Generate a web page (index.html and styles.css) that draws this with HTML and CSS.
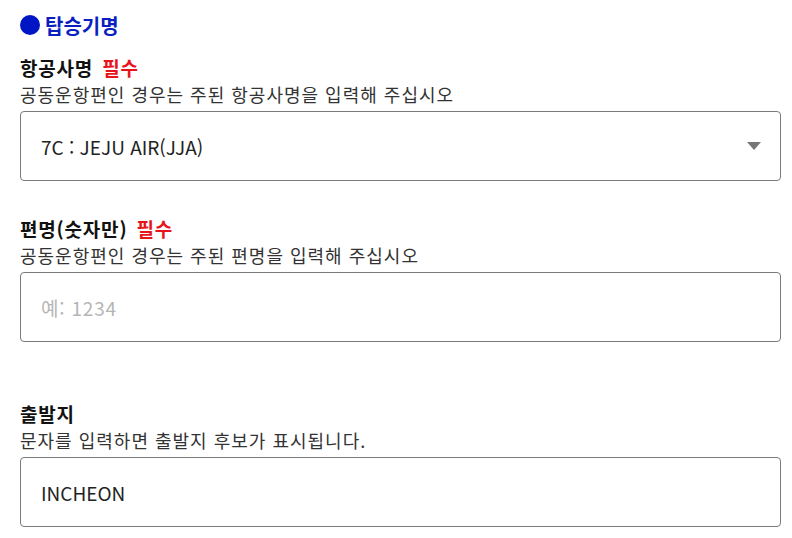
FILE: index.html
```html
<!DOCTYPE html>
<html lang="ko">
<head>
<meta charset="utf-8">
<link rel="stylesheet" href="styles.css">
</head>
<body>
<div class="page">
  <h2 class="section-title"><span class="dot"></span>탑승기명</h2>

  <div class="field field-first">
    <div class="label">항공사명 <span class="req">필수</span></div>
    <div class="help">공동운항편인 경우는 주된 항공사명을 입력해 주십시오</div>
    <div class="box select">
      <span class="value">7C : JEJU AIR(JJA)</span>
      <span class="arrow"></span>
    </div>
  </div>

  <div class="field field-second">
    <div class="label">편명(숫자만) <span class="req">필수</span></div>
    <div class="help">공동운항편인 경우는 주된 편명을 입력해 주십시오</div>
    <div class="box">
      <span class="placeholder">예: 1234</span>
    </div>
  </div>

  <div class="field field-third">
    <div class="label">출발지</div>
    <div class="help">문자를 입력하면 출발지 후보가 표시됩니다.</div>
    <div class="box">
      <span class="value">INCHEON</span>
    </div>
  </div>
</div>
</body>
</html>
```
FILE: styles.css
```css
html, body {
  margin: 0;
  padding: 0;
  background: #ffffff;
}
body {
  font-family: "Noto Sans CJK KR", "Noto Sans", sans-serif;
  color: #111111;
}
.page {
  padding: 10px 11px 0 20px;
  display: flex;
  flex-direction: column;
}
.section-title {
  margin: 0;
  height: 30px;
  display: flex;
  align-items: center;
  gap: 5px;
  font-size: 20px;
  font-weight: 700;
  color: #0a1fbf;
}
.dot {
  width: 20px;
  height: 20px;
  border-radius: 50%;
  background: #0015c4;
  display: inline-block;
}
.field {
  display: flex;
  flex-direction: column;
}
.field-first { margin-top: 15px; }
.field-second { margin-top: 35px; }
.field-third { margin-top: 59px; }
.label {
  font-size: 19px;
  font-weight: 700;
  line-height: 26px;
  letter-spacing: 0.8px;
  color: #111111;
}
.req {
  color: #e8141c;
  font-size: 19px;
  margin-left: 3px;
}
.help {
  font-size: 18px;
  line-height: 26px;
  letter-spacing: 1px;
  color: #333333;
}
.box {
  margin-top: 4px;
  height: 68px;
  border: 1px solid #7a7a7a;
  border-radius: 4px;
  display: flex;
  align-items: center;
  padding: 0 20px;
  font-size: 19px;
  color: #222222;
}
.select {
  justify-content: space-between;
}
.placeholder {
  color: #b5b5b5;
  letter-spacing: 0.8px;
}
.arrow {
  width: 0;
  height: 0;
  border-left: 7px solid transparent;
  border-right: 7px solid transparent;
  border-top: 8px solid #777777;
  margin-right: -1px;
}
```
